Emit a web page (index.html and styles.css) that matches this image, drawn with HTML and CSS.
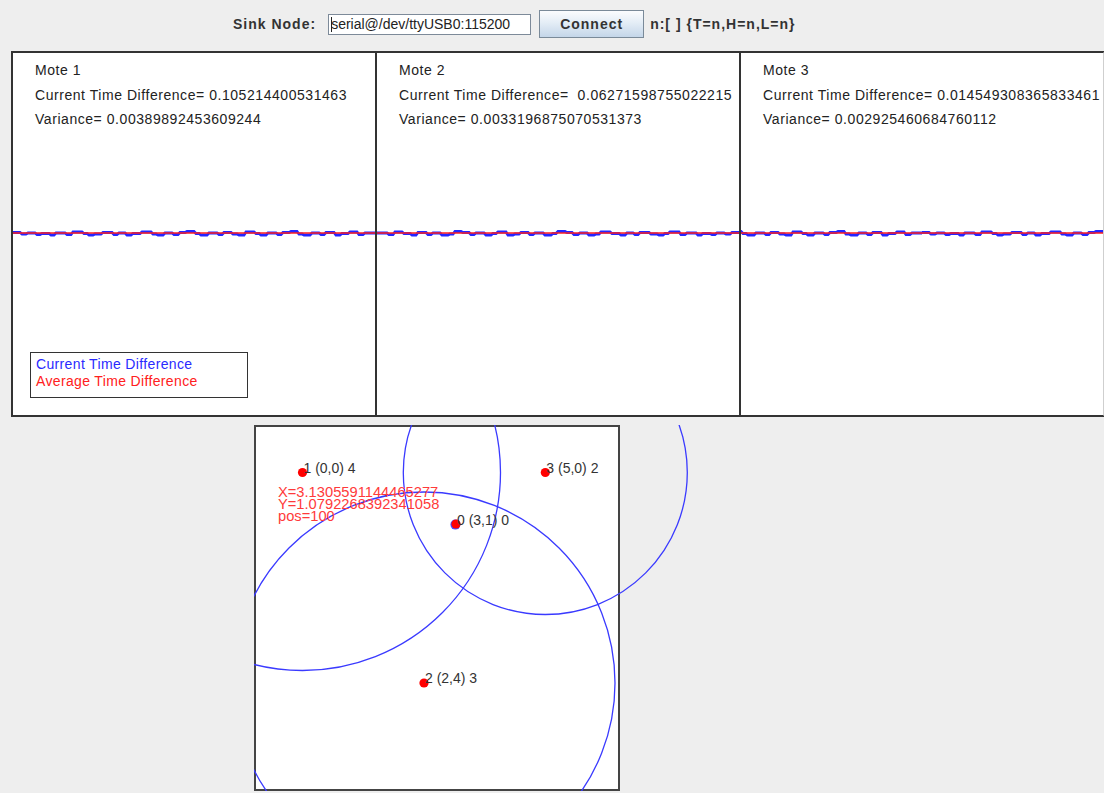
FILE: index.html
```html
<!DOCTYPE html>
<html>
<head>
<meta charset="utf-8">
<title>Time Sync Monitor</title>
<link rel="stylesheet" href="styles.css">
</head>
<body>
<!-- shared trace shape for the mote plots -->
<svg class="defs" width="0" height="0" aria-hidden="true">
  <defs>
    <polyline id="trace" points="0,179.5 7,179.5 9,181 13,181 15,180 22,180 24,181.5 27,181.5 29,180.5 36,180.5 38,182 41,182 43,180 52,180 54,181.5 58,181.5 60,179 69,179 71,180.5 74,180.5 76,182 80,182 82,181 88,181 90,179.5 99,179.5 101,181.5 104,181.5 106,180 112,180 114,182 118,182 120,180.5 127,180.5 129,179 138,179 140,181 143,181 145,182 150,182 152,180 159,180 161,181.5 165,181.5 167,179.5 172,179.5 174,178.5 181,178.5 183,180.5 186,180.5 188,182 194,182 196,180 204,180 206,181.5 209,181.5 211,179.5 218,179.5 220,181 224,181 226,182 231,182 233,179 241,179 243,180.5 246,180.5 248,182 253,182 255,180 263,180 265,181.5 268,181.5 270,179.5 276,179.5 278,178.5 284,178.5 286,181 289,181 291,182 297,182 299,180 306,180 308,181.5 311,181.5 313,179.5 321,179.5 323,182 327,182 329,180.5 335,180.5 337,179 344,179 346,181.5 350,181.5 352,180 362,180"/>
  </defs>
</svg>

<header class="toolbar">
  <span class="label sink">Sink Node:</span>
  <div class="field"><span class="caret"></span>serial@/dev/ttyUSB0:115200</div>
  <button class="btn">Connect</button>
  <span class="label">n:[ ] {T=n,H=n,L=n}</span>
</header>

<section class="motes">
  <div class="mote">
    <svg class="plot" viewBox="0 0 362 362">
      <use href="#trace" class="cur"/>
      <line x1="0" y1="180" x2="362" y2="180" class="avg"/>
    </svg>
    <div class="stats">
      <div>Mote 1</div>
      <div>Current Time Difference= 0.105214400531463</div>
      <div>Variance= 0.00389892453609244</div>
    </div>
    <div class="legend">
      <div class="lg-cur">Current Time Difference</div>
      <div class="lg-avg">Average Time Difference</div>
    </div>
  </div>
  <div class="mote">
    <svg class="plot" viewBox="0 0 362 362">
      <use href="#trace" class="cur" transform="translate(362,0) scale(-1,1)"/>
      <line x1="0" y1="180" x2="362" y2="180" class="avg"/>
    </svg>
    <div class="stats">
      <div>Mote 2</div>
      <div>Current Time Difference=  0.06271598755022215</div>
      <div>Variance= 0.0033196875070531373</div>
    </div>
  </div>
  <div class="mote">
    <svg class="plot" viewBox="0 0 362 362">
      <use href="#trace" class="cur" transform="translate(181,0)"/>
      <use href="#trace" class="cur" transform="translate(-181,0)"/>
      <line x1="0" y1="180" x2="362" y2="180" class="avg"/>
    </svg>
    <div class="stats">
      <div>Mote 3</div>
      <div>Current Time Difference= 0.014549308365833461</div>
      <div>Variance= 0.002925460684760112</div>
    </div>
  </div>
</section>

<section class="map-row">
  <div class="map">
    <svg class="field-map" width="460" height="366" viewBox="0 0 460 366">
      <g class="ranges">
        <circle cx="48.5" cy="47.5" r="198"/>
        <circle cx="291.3" cy="47.5" r="142"/>
        <circle cx="170" cy="258" r="191"/>
      </g>
      <g class="nodes">
        <circle cx="48.5" cy="47.5" r="4.6"/>
        <circle cx="291.3" cy="47.5" r="4.6"/>
        <circle cx="201.4" cy="99.6" r="5" class="est"/>
        <circle cx="202" cy="99" r="4.6"/>
        <circle cx="170" cy="258" r="4.6"/>
      </g>
      <g class="labels">
        <text x="49.5" y="48">1 (0,0) 4</text>
        <text x="292.3" y="48">3 (5,0) 2</text>
        <text x="203" y="100">0 (3,1) 0</text>
        <text x="171" y="258">2 (2,4) 3</text>
      </g>
      <g class="estimate">
        <text x="24" y="72">X=3.1305591144465277</text>
        <text x="24" y="84">Y=1.0792268392341058</text>
        <text x="24" y="96">pos=100</text>
      </g>
    </svg>
  </div>
</section>
</body>
</html>
```

FILE: styles.css
```css
* {
  box-sizing: border-box;
}

html, body {
  margin: 0;
  padding: 0;
  background: #eeeeee;
  font-family: "Liberation Sans", Arial, sans-serif;
  color: #222;
  overflow: hidden;
}

.defs {
  position: absolute;
  width: 0;
  height: 0;
}

/* ---- connection toolbar ---- */
.toolbar {
  display: flex;
  align-items: center;
  height: 51px;
  padding: 10px 0 13px 233px;
}

.label {
  font-weight: bold;
  font-size: 14px;
  letter-spacing: 1px;
  color: #333;
  white-space: nowrap;
}

.sink {
  margin-right: 12px;
}

.field {
  width: 203px;
  height: 21px;
  border: 1px solid #7d8a99;
  background: #fff;
  font-size: 14px;
  line-height: 19px;
  padding-left: 2px;
  color: #222;
  white-space: nowrap;
  overflow: hidden;
  margin-right: 8px;
}

.caret {
  display: inline-block;
  width: 1px;
  height: 15px;
  background: #222;
  vertical-align: -3px;
  margin-right: -1px;
}

.btn {
  width: 105px;
  height: 28px;
  border: 1px solid #7a8a99;
  border-radius: 0;
  background: linear-gradient(#fbfcfe 0%, #e4edf6 45%, #c4d6e9 100%);
  font-family: "Liberation Sans", Arial, sans-serif;
  font-weight: bold;
  font-size: 14px;
  letter-spacing: 1px;
  color: #333;
  padding: 0;
  margin-right: 6px;
}

/* ---- mote panels ---- */
.motes {
  display: flex;
  width: max-content;
  margin-left: 11px;
  border: 1px solid #333;
  border-right: 0;
}

.mote {
  position: relative;
  width: 364px;
  height: 364px;
  border: 1px solid #333;
  background: #fff;
  display: flex;
  flex-direction: column;
}

.mote:last-child {
  border-right-color: #cfcfcf;
}

.plot {
  position: absolute;
  left: 0;
  top: 0;
  width: 362px;
  height: 362px;
}

.plot .cur {
  fill: none;
  stroke: #2525ff;
  stroke-width: 2.8;
}

.plot .avg {
  stroke: #ff1f1f;
  stroke-width: 1.3;
}

.stats {
  position: relative;
  padding: 5px 0 0 22px;
  font-size: 14px;
  line-height: 24.5px;
  letter-spacing: 0.55px;
  color: #222;
}

.stats div {
  white-space: pre;
}

.legend {
  position: relative;
  margin: auto 0 17px 17px;
  width: 218px;
  height: 46px;
  border: 1px solid #333;
  background: #fff;
  padding: 3px 0 0 5px;
  font-size: 14px;
  line-height: 17px;
  letter-spacing: 0.35px;
}

.lg-cur {
  color: #2a2aff;
}

.lg-avg {
  color: #ff2020;
}

/* ---- localisation map ---- */
.map-row {
  margin: 8px 0 0 254px;
}

.map {
  position: relative;
  width: 366px;
  height: 366px;
  border: 2px solid #444;
  background: #fff;
}

.field-map {
  position: absolute;
  left: -2px;
  top: -2px;
  overflow: hidden;
}

.ranges circle {
  fill: none;
  stroke: #3a3aff;
  stroke-width: 1.3;
}

.nodes circle {
  fill: #ff0000;
}

.nodes .est {
  fill: #4a4aff;
}

.labels text {
  font-family: "Liberation Sans", Arial, sans-serif;
  font-size: 14px;
  fill: #333;
}

.estimate text {
  font-family: "Liberation Sans", Arial, sans-serif;
  font-size: 14.7px;
  fill: #ff3a3a;
}
```
